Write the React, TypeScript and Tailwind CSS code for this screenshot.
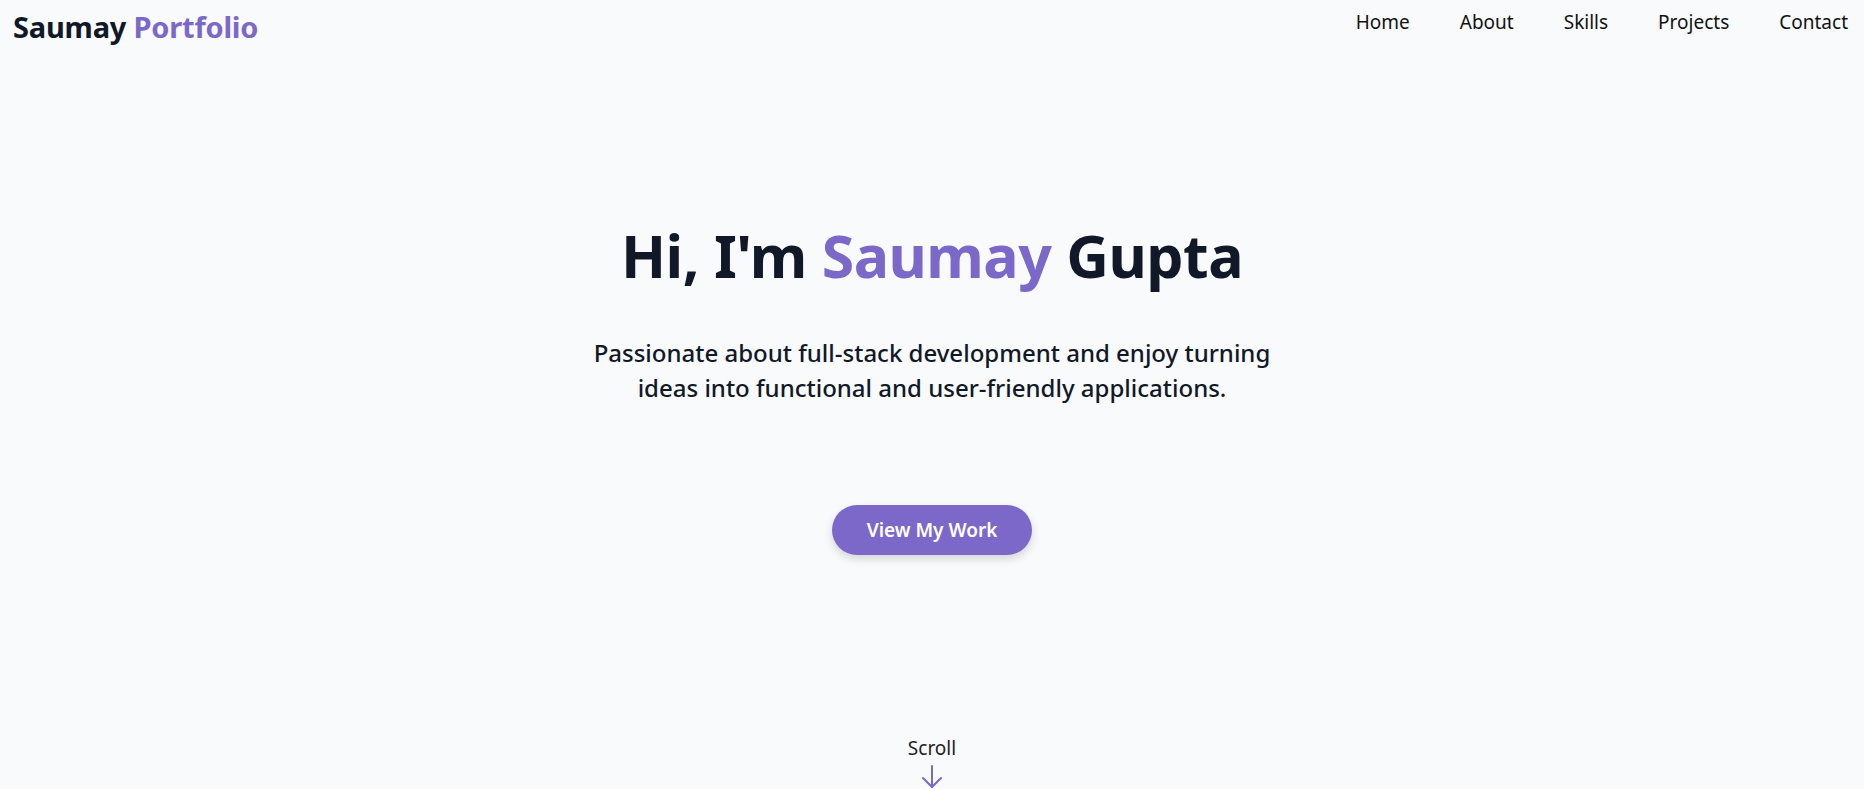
const navItems = ["Home", "About", "Skills", "Projects", "Contact"];

function ScrollArrow() {
  return (
    <svg width="22" height="24" viewBox="0 0 22 24" fill="none" className="text-[#7b68c8]">
      <path d="M11 1v21" stroke="currentColor" strokeWidth="2" strokeLinecap="round" />
      <path d="M2 13l9 9 9-9" stroke="currentColor" strokeWidth="2" strokeLinecap="round" strokeLinejoin="round" />
    </svg>
  );
}

export default function App() {
  return (
    <div
      className="min-h-screen w-full bg-[#f8fafc] text-[#111827]"
      style={{ fontFamily: '"Segoe UI", "Noto Sans", "Open Sans", sans-serif' }}
    >
      {/* Header */}
      <header className="flex h-[52px] items-center justify-between pl-[13px] pr-[16px]">
        <a className="text-[29px] font-bold leading-none tracking-[-0.2px]">
          Saumay <span className="text-[#7b68c8]">Portfolio</span>
        </a>
        <nav className="flex items-center gap-[50px] -mt-[8px]">
          {navItems.map((item) => (
            <a key={item} className="text-[19px] leading-none text-[#111]">
              {item}
            </a>
          ))}
        </nav>
      </header>

      {/* Hero */}
      <main className="flex flex-col items-center text-center">
        <h1 className="mt-[174px] text-[59px] font-bold leading-none tracking-[-0.5px]">
          Hi, I'm <span className="text-[#7b68c8]">Saumay</span> Gupta
        </h1>
        <p className="mt-[50px] max-w-[700px] text-[24px] font-medium leading-[35px] text-[#111827]">
          Passionate about full-stack development and enjoy turning ideas into
          functional and user-friendly applications.
        </p>
        <button className="mt-[100px] h-[50px] w-[200px] rounded-full bg-[#7b68c8] text-[19px] font-semibold text-white shadow-[0_4px_10px_rgba(0,0,0,0.15)]">
          View My Work
        </button>
        <div className="mt-[179px] flex flex-col items-center">
          <span className="text-[19px] leading-[28px] text-[#222]">Scroll</span>
          <div className="mt-[3px]">
            <ScrollArrow />
          </div>
        </div>
      </main>
    </div>
  );
}
